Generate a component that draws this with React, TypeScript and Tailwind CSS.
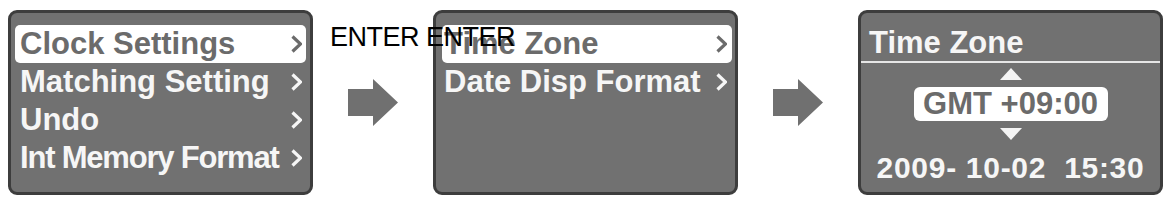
import type { ReactNode } from "react"

const font = { fontFamily: '"Liberation Sans", Arial, sans-serif' }

function Chevron({ color }: { color: string }) {
  return (
    <svg width="11" height="18" viewBox="0 0 11 18" className="shrink-0">
      <path d="M1.5 1.5 L9.5 9 L1.5 16.5" fill="none" stroke={color} strokeWidth="3.2" />
    </svg>
  )
}

function Arrow() {
  return (
    <svg width="50" height="47" viewBox="0 0 50 47" className="shrink-0">
      <polygon points="0,10 25,10 25,0 50,23.5 25,47 25,37 0,37" fill="#707070" />
    </svg>
  )
}

function Triangle({ down }: { down?: boolean }) {
  return (
    <svg width="22" height="12" viewBox="0 0 22 12">
      <polygon points={down ? "0,0 22,0 11,12" : "11,0 22,12 0,12"} fill="#f4f4f4" />
    </svg>
  )
}

function Panel({ children, className = "" }: { children: ReactNode; className?: string }) {
  return (
    <div
      className={`w-[305px] h-[185px] shrink-0 rounded-[9px] border-[3px] border-[#3d3d3d] bg-[#717171] ${className}`}
    >
      {children}
    </div>
  )
}

type item = { label: string; active?: boolean; tight?: boolean }

function MenuRow({ item, pl, pr }: { item: item; pl: string; pr: string }) {
  const color = item.active ? "#6b6b6b" : "#f6f6f6"
  return (
    <div
      className={`flex items-center justify-between h-[38px] rounded-[5px] ${pl} ${pr} ${
        item.active ? "bg-white" : ""
      }`}
    >
      <span
        className={`font-bold text-[31px] leading-[38px] whitespace-nowrap ${
          item.tight ? "tracking-[-1.2px]" : ""
        }`}
        style={{ color }}
      >
        {item.label}
      </span>
      <Chevron color={color} />
    </div>
  )
}

const mainMenu: item[] = [
  { label: "Clock Settings", active: true },
  { label: "Matching Setting" },
  { label: "Undo" },
  { label: "Int Memory Format", tight: true },
]

const clockMenu: item[] = [
  { label: "Time Zone", active: true },
  { label: "Date Disp Format" },
]

export default function App() {
  return (
    <div className="relative w-[1167px] h-[201px] bg-white overflow-hidden" style={font}>
      <div className="flex items-center gap-[35px] pl-[8px] pt-[10px]">
        <Panel className="pt-[12px] px-[4px]">
          {mainMenu.map((m) => (
            <MenuRow key={m.label} item={m} pl="pl-[5px]" pr="pr-[4px]" />
          ))}
        </Panel>

        <Arrow />

        <Panel className="pt-[12px] pl-[6px] pr-[3px]">
          {clockMenu.map((m) => (
            <MenuRow key={m.label} item={m} pl="pl-[2px]" pr="pr-[5px]" />
          ))}
        </Panel>

        <Arrow />

        <Panel className="w-[304px] flex flex-col items-center">
          <div className="w-full h-[48px] pt-[14px] pl-[8px]">
            <span className="font-bold text-[31px] leading-[31px] text-[#f6f6f6]">Time Zone</span>
          </div>
          <div className="w-full h-[2px] bg-[#e6e6e6]" />
          <div className="mt-[5px] h-[11px] flex">
            <Triangle />
          </div>
          <div className="mt-[8px] w-[194px] h-[34px] rounded-[6px] bg-white flex items-center justify-center">
            <span className="font-bold text-[31px] leading-[34px] text-[#6b6b6b] whitespace-nowrap">
              GMT +09:00
            </span>
          </div>
          <div className="mt-[7px] h-[12px] flex">
            <Triangle down />
          </div>
          <div className="mt-[13px] font-bold text-[30px] leading-[30px] tracking-[0.7px] text-[#f6f6f6] whitespace-pre">
            2009- 10-02  15:30
          </div>
        </Panel>
      </div>

      <div className="absolute left-[330px] top-[24px] z-10 text-[27px] leading-[27px] tracking-[-0.5px] text-black whitespace-nowrap">
        ENTER ENTER
      </div>
    </div>
  )
}
